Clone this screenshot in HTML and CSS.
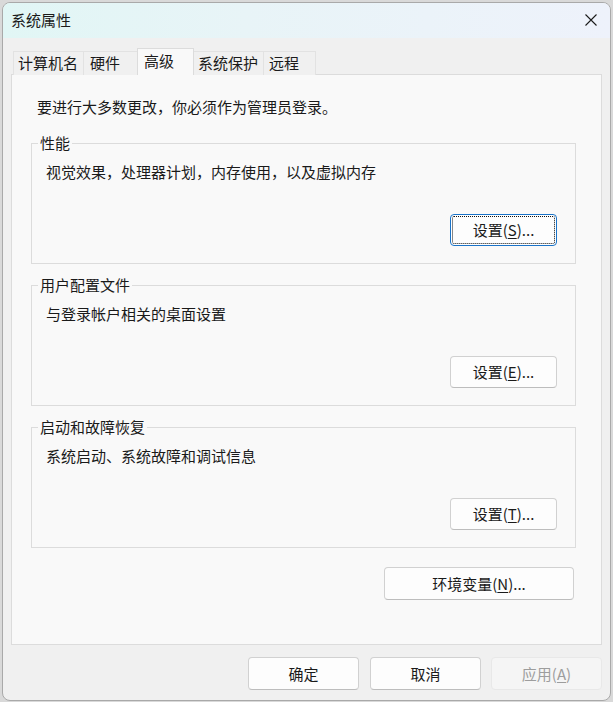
FILE: index.html
```html
<!DOCTYPE html>
<html lang="zh-CN">
<head>
<meta charset="utf-8">
<title>系统属性</title>
<link rel="stylesheet" href="styles.css">
</head>
<body>
<div class="window">
  <div class="titlebar">
    <span class="title">系统属性</span>
    <span class="close">
      <svg width="12" height="12" viewBox="0 0 12 12"><path d="M0.5 0.5 L11.5 11.5 M11.5 0.5 L0.5 11.5" stroke="#1b1b1b" stroke-width="1.1" fill="none"/></svg>
    </span>
  </div>
  <div class="content">
    <div class="tabs">
      <div class="tab t1">计算机名</div>
      <div class="tab t2">硬件</div>
      <div class="tab t3 selected">高级</div>
      <div class="tab t4">系统保护</div>
      <div class="tab t5">远程</div>
    </div>
    <div class="panel">
      <p class="note">要进行大多数更改，你必须作为管理员登录。</p>
      <fieldset class="group">
        <legend>性能</legend>
        <p class="desc">视觉效果，处理器计划，内存使用，以及虚拟内存</p>
        <div class="actions"><button class="btn set focused">设置(<u>S</u>)...</button></div>
      </fieldset>
      <fieldset class="group">
        <legend>用户配置文件</legend>
        <p class="desc">与登录帐户相关的桌面设置</p>
        <div class="actions"><button class="btn set">设置(<u>E</u>)...</button></div>
      </fieldset>
      <fieldset class="group">
        <legend>启动和故障恢复</legend>
        <p class="desc">系统启动、系统故障和调试信息</p>
        <div class="actions"><button class="btn set">设置(<u>T</u>)...</button></div>
      </fieldset>
      <div class="env-row"><button class="btn env">环境变量(<u>N</u>)...</button></div>
    </div>
    <div class="footer">
      <button class="btn dlg">确定</button>
      <button class="btn dlg mid">取消</button>
      <button class="btn dlg disabled">应用(<u>A</u>)</button>
    </div>
  </div>
</div>
</body>
</html>
```
FILE: styles.css
```css
* { box-sizing: border-box; }
html, body { margin: 0; padding: 0; }
body {
  width: 613px;
  height: 702px;
  background: #d9d9d9;
  font-family: "Noto Sans CJK SC", "Microsoft YaHei", sans-serif;
  font-size: 15px;
  line-height: 20px;
  color: #1a1a1a;
  overflow: hidden;
}
.window {
  margin: 2px 0 0 2px;
  width: 609px;
  height: 699px;
  border: 1px solid #a9a9a9;
  border-radius: 8px;
  overflow: hidden;
  background: #f0f0f0;
}
.titlebar {
  height: 35px;
  display: flex;
  align-items: center;
  justify-content: space-between;
  padding: 0 13px 1px 8px;
  background: linear-gradient(90deg, #e1f6f5 0%, #e8f4f7 40%, #eef2fb 100%);
}
.title { color: #1a1a1a; }
.close { display: flex; width: 12px; height: 12px; }
.content { padding: 10px 8px 0 8px; }
.tabs {
  display: flex;
  align-items: flex-end;
  height: 27px;
  padding-left: 2px;
}
.tab {
  height: 24px;
  line-height: 22px;
  border: 1px solid #e2e2e2;
  border-bottom: none;
  background: #f0f0f0;
  margin-right: -1px;
  white-space: nowrap;
}
.t1 { width: 71px; padding-left: 4px; }
.t2 { width: 55px; padding-left: 6px; }
.t3 { width: 57px; padding-left: 6px; }
.t4 { width: 71px; padding-left: 4px; }
.t5 { width: 53px; padding-left: 5px; }
.tab.selected {
  height: 27px;
  line-height: 24px;
  background: #f9f9f9;
  border-color: #dcdcdc;
  position: relative;
  z-index: 1;
}
.panel {
  margin-top: -1px;
  height: 571px;
  border: 1px solid #dcdcdc;
  background: #f9f9f9;
  padding: 22px 0 0 19px;
}
.note { margin: 0 0 16px 6px; }
.group {
  width: 545px;
  margin: 0 0 11px 0;
  border: 1px solid #dcdcdc;
  padding: 0 0 17px 6px;
  min-width: 0;
}
.group legend {
  padding: 0 2px;
  line-height: 20px;
}
.desc { margin: 9px 0 0 8px; }
.actions {
  display: flex;
  justify-content: flex-end;
  margin-top: 32px;
  padding-right: 18px;
}
.btn {
  font-family: inherit;
  font-size: 15px;
  line-height: 20px;
  color: #1a1a1a;
  background: #fdfdfd;
  border: 1px solid #d1d1d1;
  border-bottom-color: #bdbdbd;
  border-radius: 4px;
  padding: 0;
  height: 32px;
  text-align: center;
}
.btn u { text-underline-offset: 2px; }
.set { width: 107px; }
.focused {
  border: 1px solid #1a73c8;
  box-shadow: inset 0 0 0 1px #ffffff;
  outline: 1px dotted #111;
  outline-offset: -3px;
}
.env-row {
  width: 545px;
  display: flex;
  justify-content: flex-end;
  padding-right: 2px;
  margin-top: 19px;
}
.env { width: 190px; height: 33px; }
.footer {
  display: flex;
  justify-content: flex-end;
  gap: 10px;
  padding: 12px 0 0 0;
}
.dlg { width: 111px; height: 33px; }
.mid { margin-left: 1px; }
.disabled {
  background: #f5f5f5;
  border-color: #e8e8e8;
  color: #9d9d9d;
}
```
